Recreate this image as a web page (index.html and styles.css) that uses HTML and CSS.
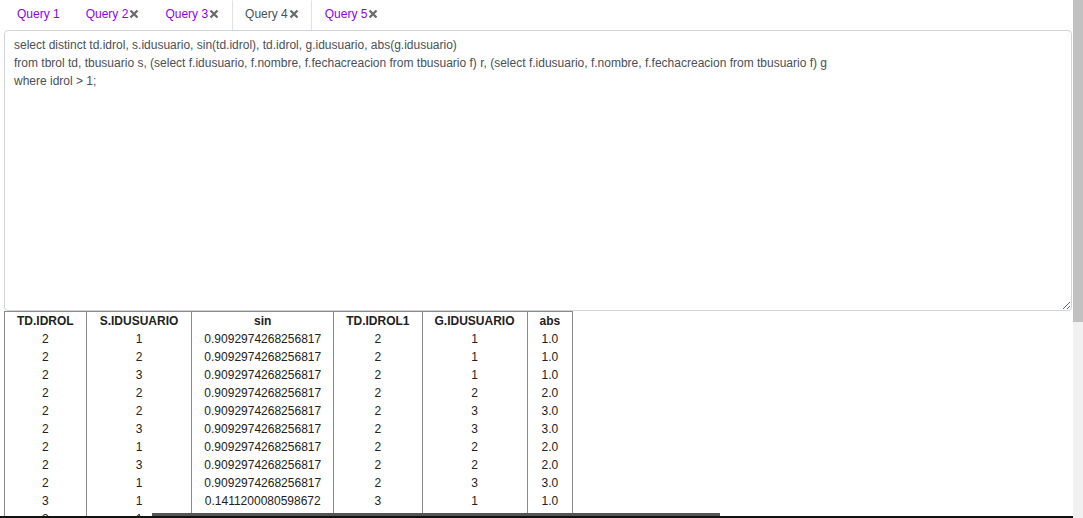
FILE: index.html
```html
<!DOCTYPE html>
<html>
<head>
<meta charset="utf-8">
<link rel="stylesheet" href="styles.css">
</head>
<body>
<div class="page">
  <ul class="tabs">
    <li class="tab"><a class="tab-link">Query 1</a></li>
    <li class="tab"><a class="tab-link">Query 2<svg class="close" viewBox="0 0 10 10" width="10" height="10"><path d="M1.5 1.5L8.5 8.5M8.5 1.5L1.5 8.5"/></svg></a></li>
    <li class="tab"><a class="tab-link">Query 3<svg class="close" viewBox="0 0 10 10" width="10" height="10"><path d="M1.5 1.5L8.5 8.5M8.5 1.5L1.5 8.5"/></svg></a></li>
    <li class="tab active"><a class="tab-link">Query 4<svg class="close" viewBox="0 0 10 10" width="10" height="10"><path d="M1.5 1.5L8.5 8.5M8.5 1.5L1.5 8.5"/></svg></a></li>
    <li class="tab"><a class="tab-link">Query 5<svg class="close" viewBox="0 0 10 10" width="10" height="10"><path d="M1.5 1.5L8.5 8.5M8.5 1.5L1.5 8.5"/></svg></a></li>
  </ul>
  <textarea class="editor" spellcheck="false">select distinct td.idrol, s.idusuario, sin(td.idrol), td.idrol, g.idusuario, abs(g.idusuario)
from tbrol td, tbusuario s, (select f.idusuario, f.nombre, f.fechacreacion from tbusuario f) r, (select f.idusuario, f.nombre, f.fechacreacion from tbusuario f) g
where idrol &gt; 1;</textarea>
  <table class="results">
    <thead>
      <tr><th>TD.IDROL</th><th class="wide">S.IDUSUARIO</th><th>sin</th><th>TD.IDROL1</th><th>G.IDUSUARIO</th><th>abs</th></tr>
    </thead>
    <tbody>
      <tr><td>2</td><td>1</td><td>0.9092974268256817</td><td>2</td><td>1</td><td>1.0</td></tr>
      <tr><td>2</td><td>2</td><td>0.9092974268256817</td><td>2</td><td>1</td><td>1.0</td></tr>
      <tr><td>2</td><td>3</td><td>0.9092974268256817</td><td>2</td><td>1</td><td>1.0</td></tr>
      <tr><td>2</td><td>2</td><td>0.9092974268256817</td><td>2</td><td>2</td><td>2.0</td></tr>
      <tr><td>2</td><td>2</td><td>0.9092974268256817</td><td>2</td><td>3</td><td>3.0</td></tr>
      <tr><td>2</td><td>3</td><td>0.9092974268256817</td><td>2</td><td>3</td><td>3.0</td></tr>
      <tr><td>2</td><td>1</td><td>0.9092974268256817</td><td>2</td><td>2</td><td>2.0</td></tr>
      <tr><td>2</td><td>3</td><td>0.9092974268256817</td><td>2</td><td>2</td><td>2.0</td></tr>
      <tr><td>2</td><td>1</td><td>0.9092974268256817</td><td>2</td><td>3</td><td>3.0</td></tr>
      <tr><td>3</td><td>1</td><td>0.1411200080598672</td><td>3</td><td>1</td><td>1.0</td></tr>
      <tr><td>2</td><td>1</td><td>0.9092974268256817</td><td>2</td><td>1</td><td>1.0</td></tr>
      <tr><td>3</td><td>1</td><td>0.1411200080598672</td><td>3</td><td>2</td><td>2.0</td></tr>
      <tr><td>3</td><td>1</td><td>0.1411200080598672</td><td>3</td><td>3</td><td>3.0</td></tr>
      <tr><td>3</td><td>2</td><td>0.1411200080598672</td><td>3</td><td>1</td><td>1.0</td></tr>
      <tr><td>3</td><td>2</td><td>0.1411200080598672</td><td>3</td><td>2</td><td>2.0</td></tr>
      <tr><td>3</td><td>2</td><td>0.1411200080598672</td><td>3</td><td>3</td><td>3.0</td></tr>
      <tr><td>3</td><td>3</td><td>0.1411200080598672</td><td>3</td><td>1</td><td>1.0</td></tr>
      <tr><td>3</td><td>3</td><td>0.1411200080598672</td><td>3</td><td>2</td><td>2.0</td></tr>
      <tr><td>3</td><td>3</td><td>0.1411200080598672</td><td>3</td><td>3</td><td>3.0</td></tr>
      <tr><td>2</td><td>1</td><td>0.9092974268256817</td><td>2</td><td>2</td><td>2.0</td></tr>
      <tr><td>2</td><td>2</td><td>0.9092974268256817</td><td>2</td><td>2</td><td>2.0</td></tr>
      <tr><td>2</td><td>3</td><td>0.9092974268256817</td><td>2</td><td>1</td><td>1.0</td></tr>
      <tr><td>3</td><td>1</td><td>0.1411200080598672</td><td>3</td><td>2</td><td>2.0</td></tr>
      <tr><td>3</td><td>2</td><td>0.1411200080598672</td><td>3</td><td>3</td><td>3.0</td></tr>
      <tr><td>3</td><td>3</td><td>0.1411200080598672</td><td>3</td><td>1</td><td>1.0</td></tr>
      <tr><td>2</td><td>2</td><td>0.9092974268256817</td><td>2</td><td>3</td><td>3.0</td></tr>
      <tr><td>2</td><td>3</td><td>0.9092974268256817</td><td>2</td><td>2</td><td>2.0</td></tr>
      <tr><td>3</td><td>2</td><td>0.1411200080598672</td><td>3</td><td>1</td><td>1.0</td></tr>
    </tbody>
  </table>
</div>
<div class="vscroll"><div class="vscroll-thumb"></div></div>
<div class="hbar"><div class="hbar-thumb"></div></div>
</body>
</html>
```
FILE: styles.css
```css
body {
  margin: 0;
  font-family: "Liberation Sans", Arial, sans-serif;
  font-size: 12px;
  background: #fff;
  height: 100vh;
  overflow: hidden;
  display: flex;
}
.page {
  flex: 1;
  min-width: 0;
  overflow: hidden;
  padding: 0 1px 0 4px;
}
.vscroll {
  width: 10px;
  flex: none;
  background: #f1f1f1;
}
.vscroll-thumb {
  height: 322px;
  background: #c1c1c1;
}
.tabs {
  list-style: none;
  margin: 0;
  padding: 0;
  display: flex;
  height: 30px;
}
.tab {
  display: flex;
}
.tab-link {
  display: flex;
  align-items: center;
  padding: 0 12px 3px;
  height: 30px;
  box-sizing: border-box;
  border: 1px solid transparent;
  border-bottom: 0;
  color: #8a00f2;
  line-height: 16px;
  cursor: pointer;
}
.tab.active .tab-link {
  color: #495057;
  border-color: #dee2e6;
  border-top-color: transparent;
  background: #fff;
}
.close {
  margin-left: 1px;
  stroke: #6b6b6b;
  stroke-width: 2.3;
  fill: none;
}
.editor {
  display: block;
  width: 100%;
  height: 281px;
  box-sizing: border-box;
  margin: 0;
  padding: 5px 9px;
  border: 1px solid #ced4da;
  border-radius: 4px;
  font-family: "Liberation Sans", Arial, sans-serif;
  font-size: 12px;
  line-height: 18px;
  color: #495057;
  resize: vertical;
  outline: none;
}
.results {
  border-collapse: collapse;
  border-top: 1px solid #8a8a8a;
  color: #222;
}
.results th,
.results td {
  border-left: 1px solid #8a8a8a;
  border-right: 1px solid #8a8a8a;
  padding: 0 12px;
  height: 18px;
  line-height: 18px;
  text-align: center;
  white-space: nowrap;
}
.results th {
  font-weight: bold;
}
.results th.wide {
  padding: 0 13px;
}
.hbar {
  position: fixed;
  left: 0;
  right: 10px;
  bottom: 0;
  height: 2px;
  background: #111;
}
.hbar-thumb {
  position: absolute;
  left: 152px;
  width: 568px;
  top: -3px;
  height: 3px;
  background: #555;
}
```
